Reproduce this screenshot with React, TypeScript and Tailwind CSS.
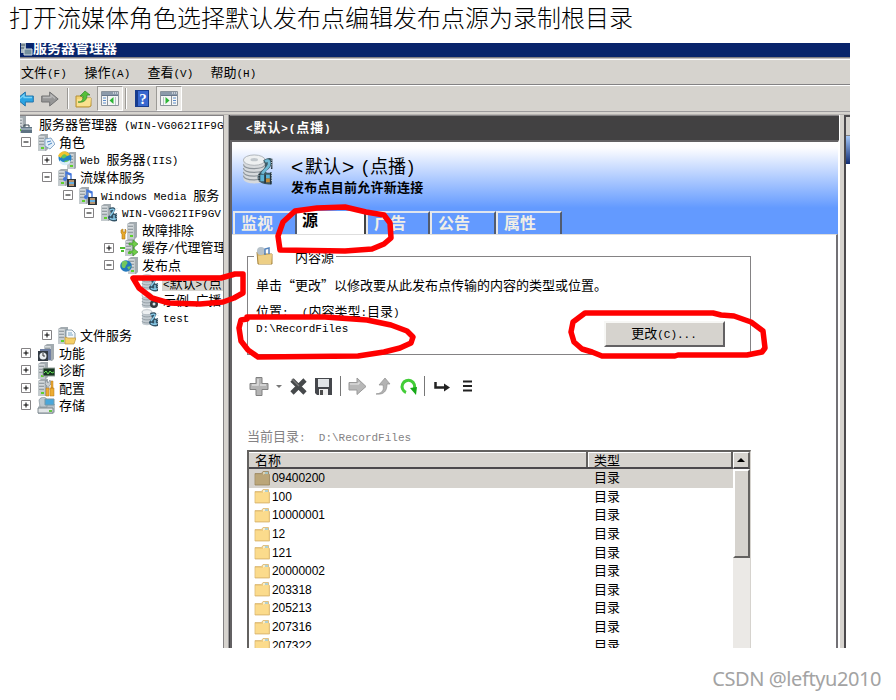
import React from "react";

const CJK = "font-['Liberation_Sans','Noto_Sans_CJK_SC',sans-serif]";

/* Mixed text: full-width glyphs keep the inherited size, half-width runs use a mono face at half the em. */
function Mix({ text, className = "" }: { text: string; className?: string }) {
  const runs = text.match(/[\x20-\x7e]+|[^\x20-\x7e]+/g) ?? [];
  return (
    <span className={"inline-block whitespace-pre " + className}>
      {runs.map((r, i) =>
        /^[\x20-\x7e]/.test(r) ? (
          <span key={i} className="font-['Liberation_Mono',monospace] text-[0.846em]">{r}</span>
        ) : (
          <span key={i} className="font-['Noto_Sans_CJK_SC',sans-serif]">{r}</span>
        )
      )}
    </span>
  );
}

type Kind =
  | "root" | "roles" | "web" | "media" | "host" | "wrench" | "cache" | "globe"
  | "point" | "broadcast" | "files" | "feature" | "diag" | "config" | "storage";

function Tower({ x = 1, y = 0 }: { x?: number; y?: number }) {
  return (
    <g transform={`translate(${x} ${y})`}>
      <path d="M0 2 3 0h7v15l-2 2H0z" fill="#a3abb0" />
      <path d="M0 2h7v15H0z" fill="#c3cacd" />
      <path d="M1 4h5M1 7h5M1 10h5" stroke="#68737a" />
      <path d="M1 3h5M1 6h5M1 9h5" stroke="#e6eaec" />
      <path d="M3 13h3v2H3z" fill="#5ed02c" />
    </g>
  );
}

function Disks() {
  return (
    <g>
      <path d="M1 3v11c0 3 10 3 10 0V3z" fill="#c3cbd1" />
      <path d="M1 6c0 2.500 10 2.500 10 0M1 9c0 2.500 10 2.500 10 0M1 12c0 2.500 10 2.500 10 0" fill="none" stroke="#8b959d" strokeWidth=".8" />
      <ellipse cx="6" cy="3.200" rx="5" ry="2.500" fill="#edf0f2" stroke="#a5aeb5" strokeWidth=".7" />
    </g>
  );
}

function Film() {
  return (
    <g>
      <path d="M9 4c6-2 8 1 5 4-1 2 1 2 3 1v8c-3 1-8 0-9-3 0-3 3-3 3-5z" fill="#335366" />
      <path d="M10 6c4-2 5 0 3 2l-3 4M10 14c1 2 3 1 6 1m-2-4v5" fill="none" stroke="#8accea" strokeWidth="1.400" />
      <path d="M17 4v3m0 3v5" stroke="#d7e6ec" strokeDasharray="1 1" />
    </g>
  );
}

function TreeIcon({ kind }: { kind: Kind }) {
  let art: React.ReactNode = null;
  if (kind === "root")
    art = <><Tower x={0} /><path d="M5 11h11v6H5z" fill="#5f7383" /><path d="M8 11V9h5v2" fill="none" stroke="#374750" /><path d="M5 13h11" stroke="#c7d6df" /></>;
  if (kind === "roles")
    art = <><Tower /><path d="m8 5 6-1 4 6-5 5-5-3z" fill="#e3effa" stroke="#6d94bb" strokeWidth=".8" /><path d="m10 8 4-1m-3 4 4-2" stroke="#4b88c4" /></>;
  if (kind === "web")
    art = <><Tower x={9} y={1} /><circle cx="7" cy="7" r="6.500" fill="#2381c8" /><path d="M3 3c4-4 8 0 6 2S6 8 4 7M6 10l5-1-2 4z" fill="#63c557" /><path d="M0 5c3-6 9-6 12-1l-3 1C7 2 4 3 3 7z" fill="#f2c230" /><path d="M2 9c3 3 6 3 10 0v3c-3 3-7 3-10 0z" fill="#d8edf8" /></>;
  if (kind === "media")
    art = <><Tower x={0} /><path d="M8 10V3l5 2v5M8 4l5 2" fill="none" stroke="#4176dc" strokeWidth="1.400" /><circle cx="7" cy="10" r="2" fill="#4176dc" /><path d="M9 10h9v8H9z" fill="#2b3238" /><path d="M11 11h5v6h-5z" fill="#b69470" /><path d="M11 14h5" stroke="#69b0e0" strokeWidth="2" /></>;
  if (kind === "host") art = <><Tower /><Film /></>;
  if (kind === "wrench")
    art = <><Tower x={7} /><path d="M1 8v3l1 1v5h3v-5l1-1V8L5 7v3H3V7z" fill="#e8aa2a" stroke="#a9731a" strokeWidth=".6" /></>;
  if (kind === "cache")
    art = <><Tower x={5} /><path d="M0 9h5M1 12h3" stroke="#4ebb30" strokeWidth="2" /><path d="M9 4h4V1l5 4-5 4V6H9zM9 12h4V9l5 4-5 4v-3H9z" fill="#70cd4a" stroke="#378f27" strokeWidth=".6" /></>;
  if (kind === "globe")
    art = <><Tower x={8} /><circle cx="6" cy="9" r="5.800" fill="#2378bd" /><path d="M2 5c3-3 7 0 5 2s-1 4-3 4-3-2-2-6M7 10l4-1-2 4z" fill="#72c75d" /></>;
  if (kind === "point") art = <><Disks /><Film /></>;
  if (kind === "broadcast") art = <><Disks /><circle cx="13" cy="12" r="4" fill="#363b40" /><circle cx="13" cy="12" r="1.500" fill="#dbe4eb" /></>;
  if (kind === "files")
    art = <><Tower x={0} /><path d="M8 3h6l3 3v7H8z" fill="#f4f8fb" stroke="#70889a" strokeWidth=".8" /><path d="M10 6h4m-4 2h5" stroke="#7ea8c5" /><path d="m7 10 3 1h8l-2 6H7z" fill="#f5cf68" stroke="#bd943f" strokeWidth=".7" /></>;
  if (kind === "feature")
    art = <><Tower x={7} /><path d="M3 5h11v11H3z" fill="#6d7da1" /><path d="M1 7h10v10H1z" fill="#323a43" /><circle cx="6" cy="12" r="3.500" fill="#e8edf1" /><path d="M6 12V9m0 3h2" stroke="#333" /></>;
  if (kind === "diag")
    art = <><Tower /><path d="M6 6h12v8H6z" fill="#173620" stroke="#9aa6a1" /><path d="m7 11 2-2 2 3 2-3 2 2 2-1" fill="none" stroke="#65e155" /></>;
  if (kind === "config")
    art = <><Tower /><path d="m9 1 2 3 2-3 1 4-2 2v4h-2V7L8 5z" fill="#c8cdd0" stroke="#77828a" strokeWidth=".6" /><path d="M9 9h3v8H9zM14 2h2v7h-2zm-1 7h4v8h-4z" fill="#edac31" stroke="#b47419" strokeWidth=".5" /></>;
  if (kind === "storage")
    art = <><path d="m1 10 3-3h14v8l-2 2H1z" fill="#b8c0c6" /><path d="M1 11h15v5H1z" fill="#e1e5e7" stroke="#68737b" strokeWidth=".8" /><path d="M2 3c2-4 8-3 8 0v7H3z" fill="#bdc8cf" stroke="#7d8a92" strokeWidth=".6" /><path d="M8 2h9v6H8z" fill="#49a7db" stroke="#7796a5" /><path d="M12 14h3" stroke="#61c640" strokeWidth="2" /></>;
  return <svg className="h-[18px] w-[18px] shrink-0" viewBox="0 0 18 18">{art}</svg>;
}

function Folder({ dark = false }: { dark?: boolean }) {
  return (
    <svg className="h-[15px] w-4 shrink-0" viewBox="0 0 16 15">
      <path d="M1 2.500h6.500l1.500-2h5.500V3l1 .5v10.500H1z" fill={dark ? "#b7a275" : "#f0cc7d"} stroke={dark ? "#9b875e" : "#d9b873"} strokeWidth=".8" />
      <path d="M9 1h5v3H9z" fill={dark ? "#ddd3b2" : "#f8edc9"} />
      <path d="M11 1.500h3v1h-3z" fill="#6ab4d8" />
      <path d="M1.500 4H9l1-1h4.500v10h-13z" fill={dark ? "#bba678" : "#fbdb8c"} />
    </svg>
  );
}

/* pad: indent before the expander, or before the icon where a row has none */
const tree: { pad: string; box?: string; kind: Kind; label: string; selected?: boolean }[] = [
  { pad: "w-0", kind: "root", label: "服务器管理器 (WIN-VG062IIF9G" },
  { pad: "w-0", box: "−", kind: "roles", label: "角色" },
  { pad: "w-[21px]", box: "+", kind: "web", label: "Web 服务器(IIS)" },
  { pad: "w-[21px]", box: "−", kind: "media", label: "流媒体服务" },
  { pad: "w-[42px]", box: "−", kind: "media", label: "Windows Media 服务" },
  { pad: "w-[63px]", box: "−", kind: "host", label: "WIN-VG062IIF9GV" },
  { pad: "w-[100px]", kind: "wrench", label: "故障排除" },
  { pad: "w-[83px]", box: "+", kind: "cache", label: "缓存/代理管理" },
  { pad: "w-[83px]", box: "−", kind: "globe", label: "发布点" },
  { pad: "w-[121px]", kind: "point", label: "<默认>(点", selected: true },
  { pad: "w-[121px]", kind: "broadcast", label: "示例_广播" },
  { pad: "w-[121px]", kind: "point", label: "test" },
  { pad: "w-[21px]", box: "+", kind: "files", label: "文件服务" },
  { pad: "w-0", box: "+", kind: "feature", label: "功能" },
  { pad: "w-0", box: "+", kind: "diag", label: "诊断" },
  { pad: "w-0", box: "+", kind: "config", label: "配置" },
  { pad: "w-0", box: "+", kind: "storage", label: "存储" },
];

function Expander({ sign }: { sign: string }) {
  return (
    <svg className="mr-[6px] h-[11px] w-[11px] shrink-0" viewBox="0 0 11 11">
      <path d="M.5.5h9v9h-9z" fill="#fff" stroke="#848284" />
      <path d={sign === "+" ? "M2.500 5h5M5 2.500v5" : "M2.500 5h5"} stroke="#000" />
    </svg>
  );
}

function Tree() {
  return (
    <div className="w-[203px] shrink-0 overflow-hidden border-t border-[#848284] bg-white pt-[.7px] text-[13px]">
      {tree.map((r, i) => (
        <div key={i} className="flex h-[17.53px] items-center whitespace-nowrap leading-[16px]">
          <span className={"shrink-0 " + (i === 0 ? "-ml-[4px] w-0" : r.box ? "ml-px " + r.pad : r.pad)} />
          {r.box && <Expander sign={r.box} />}
          <div className={"flex " + (r.box ? "-ml-px" : "")}><TreeIcon kind={r.kind} /></div>
          <Mix text={r.label} className={r.selected ? "ml-[3px] h-[16px] bg-[#d6d3ce] px-px" : i === 0 ? "ml-[5px] tracking-[.05px]" : "ml-[4px]"} />
        </div>
      ))}
    </div>
  );
}

function ConsoleIcon({ flip = false }: { flip?: boolean }) {
  return (
    <svg className="h-[15px] w-[18px]" viewBox="0 0 18 15">
      <path d="M.5.5h17v14H.5z" fill="#f5f6f5" stroke="#8b939b" />
      <path d="M1 1h16v3H1z" fill="#8c9aaa" />
      <path d="M12 2h1m1 0h1m1 0h1" stroke="#fff" />
      <path d="M1 4.500h16" stroke="#68778b" />
      <g transform={flip ? "matrix(-1 0 0 1 18 0)" : undefined}>
        <path d="M6.500 5v9" stroke="#8b939b" />
        <path d="M2 7h3M2 9.500h3M2 12h3" stroke="#5d8cc9" />
        <path d="M12.500 6v7L8.500 9.500z" fill="#2bb534" />
        <path d="M14.500 6v8" stroke="#b9c2c8" />
      </g>
    </svg>
  );
}

function BlockArrow({ blue = false }: { blue?: boolean }) {
  return (
    <svg className="h-4 w-[18px] shrink-0" viewBox="0 0 18 16">
      <g transform={blue ? "matrix(-1 0 0 1 18 0)" : undefined}>
        <path d="M.7 5h8V1l8.500 7-8.500 7v-4h-8z" fill={blue ? "#2ba4e3" : "#969696"} stroke={blue ? "#2374aa" : "#737373"} strokeWidth="1" />
        <path d="M2 6.500h8V4l4 3.500" fill="none" stroke={blue ? "#79d2f6" : "#b9b9b9"} strokeWidth="1.300" />
      </g>
    </svg>
  );
}

function Toolbar() {
  return (
    <div className="flex h-[26px] shrink-0 items-center border-t border-white">
      <div className="-ml-[4px] flex"><BlockArrow blue /></div>
      <div className="ml-[7px] flex"><BlockArrow /></div>
      <i className="ml-[8px] h-[21px] w-px bg-[#9b9995]" />
      <i className="mr-[6px] h-[21px] w-px bg-white" />
      <svg className="h-[18px] w-[17px]" viewBox="0 0 17 18">
        <path d="M1 6h5l2 2h8v8l-2 1H1z" fill="#f4d26f" stroke="#b48f36" />
        <path d="m2 9 14-1-1 8H2z" fill="#fae18f" />
        <path d="M3 12c4 0 5-2 5-6H5l5-5 5 4h-3c0 5-3 8-9 7z" fill="#55bf39" stroke="#2f8a26" strokeWidth=".7" />
      </svg>
      <div className="ml-[5px] flex h-[25px] w-[26px] items-center justify-center border border-[#9c9a96] border-r-white border-b-white bg-[#ebe9e6]"><ConsoleIcon /></div>
      <i className="ml-[2px] h-[21px] w-px bg-[#9b9995]" />
      <i className="mr-[8px] h-[21px] w-px bg-white" />
      <div className="flex h-[17px] w-[14px] items-center justify-center border border-[#173c8e] border-l-[3px] bg-[#3968cf] font-['Liberation_Serif',serif] text-[15px] font-bold leading-4 text-white">?</div>
      <div className="ml-[7px] flex h-[25px] w-[26px] items-center justify-center border border-[#9c9a96] border-r-white border-b-white bg-[#ebe9e6]"><ConsoleIcon flip /></div>
    </div>
  );
}

function Tab({ label, width }: { label: string; width: string }) {
  return (
    <div className={"h-[23px] border-t-2 border-r-2 border-l-2 border-t-[#dfe5ee] border-l-[#e8e8e8] border-r-[#515b70] pl-[6px] text-[16px] font-bold leading-[21px] text-[#f0eee6] " + width}>
      {label}
    </div>
  );
}

function Header() {
  return (
    <div className="flex h-[92px] shrink-0 flex-col bg-[linear-gradient(to_bottom,#fff_0,#fdfdff_6px,#639aff_66px,#639aff_100%)]">
      <div className="flex h-[69px] pl-[10px] pt-[12px]">
        <svg className="h-[33px] w-[32px]" viewBox="0 0 33 35">
          <path d="M1 6v20c0 7 23 7 23 0V6z" fill="#d7dadd" />
          <path d="M1 11c1 6 21 6 23 0M1 15c1 6 21 6 23 0M1 19c1 6 21 6 23 0M1 23c1 6 21 6 23 0" fill="none" stroke="#8e959b" strokeWidth="1.200" />
          <ellipse cx="12.500" cy="6.500" rx="11.500" ry="5.500" fill="#eef0f1" stroke="#adb3b8" />
          <ellipse cx="12.500" cy="6" rx="4" ry="1.700" fill="#c1c7cc" />
          <path d="M22 7c3-3 9-4 9-1 1 6-2 9-6 12 0 3 3 2 6 1v13c-6 1-15-1-15-7 0-6 9-8 8-14z" fill="#3d5a66" />
          <path d="M24 8c4-3 5 1 4 4-2 4-6 6-7 9" fill="none" stroke="#6fb9d4" strokeWidth="3" />
          <path d="M18 20v9M31 5v11M30 20v12M24 22v9" stroke="#24323a" strokeWidth="1.500" />
          <path d="M19 22h4v7h-4zM25 22h4v4h-4z" fill="#5bb3d6" /><path d="M25 26h4v4h-4z" fill="#c48b37" />
          <path d="M31 6v8m0 6v10M17.500 20v9" stroke="#e1edf2" strokeDasharray="1 1.500" />
        </svg>
        <div className="-mt-[2px] ml-[17px] whitespace-nowrap">
          <div className="flex h-[25px] text-[18px] leading-[30px]">
            <span className="w-[14px] text-[21px]">&lt;</span><span>默认</span>
            <span className="w-[21px] pl-px text-[21px]">&gt;</span><span className="w-[8px]">(</span>
            <span>点播</span><span className="pl-[2px]">)</span>
          </div>
          <div className="text-[13px] font-bold leading-[22px] tracking-[.25px]">发布点目前允许新连接</div>
        </div>
      </div>
      <div className="flex h-[23px] pl-px">
        <Tab label="监视" width="w-[64px]" />
        <div className="h-[23px] w-[69px] border-r-2 border-[#424242] bg-white pl-[5px] text-[16px] font-bold leading-[20px]">源</div>
        <Tab label="广告" width="w-[64px]" />
        <Tab label="公告" width="w-[66px]" />
        <Tab label="属性" width="w-[66px]" />
      </div>
    </div>
  );
}

function ListTools() {
  return (
    <svg className="ml-[17px] h-[22px] w-[224px]" viewBox="249 375 224 22">
      <path d="M256 377.500h6v6h6v6h-6v6h-6v-6h-6v-6h6z" fill="#b4b4b4" stroke="#808080" />
      <path d="M258 379v6h-6m8 0h6" fill="none" stroke="#ddd" strokeWidth="1.500" />
      <path d="M276 385h6l-3 3z" fill="#777" />
      <path d="m292 380 13 13m0-13-13 13" stroke="#46494b" strokeWidth="4.600" />
      <path d="m292 379 7 7" stroke="#777" strokeWidth="1.500" />
      <path d="M315 378h17v17h-15l-2-2z" fill="#45474c" />
      <path d="M318 379h11v8h-11z" fill="#e1e4e7" />
      <path d="M319 389h9v6h-9z" fill="#efefef" /><path d="M320 390h3v5h-3z" fill="#4b4b4b" />
      <path d="M340.500 376v20M424.500 376v20" stroke="#777" />
      <path d="M349 382.500h8V378l9 8.500-9 8v-4.500h-8z" fill="#b8b8b8" stroke="#999" />
      <path d="M350 384h9v-2" fill="none" stroke="#e8e8e8" />
      <path d="M376 394c7-1 8-4 7-9h-4l6-7 5 6h-3c0 7-3 11-11 10z" fill="#b3b3b3" stroke="#8f8f8f" strokeWidth=".7" />
      <path d="M406 392.500a6.300 6.300 0 1 1 8-3" fill="none" stroke="#43cd38" strokeWidth="3" />
      <path d="m410 388 7-1-1 8z" fill="#16a918" />
      <path d="M435.500 382v5.500H445" fill="none" stroke="#222" strokeWidth="2.500" /><path d="m444 383.500 6 4-6 4z" fill="#222" />
      <path d="M463 381.500h9M463 386h9M463 390.500h9" stroke="#222" strokeWidth="2" />
    </svg>
  );
}

const rows = ["09400200", "100", "10000001", "12", "121", "20000002", "203318", "205213", "207316", "207322"];

function FileTable() {
  return (
    <div className="ml-[15px] flex h-[199px] w-[504px] shrink-0 overflow-hidden border-t-2 border-l-2 border-[#63615f] border-r border-r-[#d6d3ce]">
      <div className="w-[484px] shrink-0">
        <div className="flex h-[17px] border-b-2 border-[#4b494c] bg-[#d6d3ce] text-[13px] leading-[17px] shadow-[inset_0_1px_#fff]">
          <div className="w-[339px] border-r-2 border-[#63615f] pl-[6px]">名称</div>
          <div className="w-[145px] border-r-2 border-l border-r-[#63615f] border-l-white pl-[5px]">类型</div>
        </div>
        {rows.map((r, i) => (
          <div key={r} className={"flex h-[18.6px] items-center pl-[5px] text-[12px] leading-[18px] " + (i === 0 ? "bg-[#d6d3ce]" : "")}>
            <Folder dark={i === 0} />
            <span className="ml-[2px] w-[322px] font-['Liberation_Sans',sans-serif] tracking-[-.05px]">{r}</span>
            <span className="text-[13px]">目录</span>
          </div>
        ))}
      </div>
      <div className="w-[17px] bg-[#ebe9e6]">
        <div className="flex h-[17px] items-center justify-center border border-white border-r-2 border-b-2 border-r-[#63615f] border-b-[#4b494c] bg-[#d6d3ce]">
          <i className="h-0 w-0 border-x-4 border-b-4 border-x-transparent border-b-black" />
        </div>
        <div className="h-[89px] border-2 border-white border-r-[#63615f] border-b-[#63615f] bg-[#d6d3ce]" />
      </div>
    </div>
  );
}

function SourcePane() {
  return (
    <div className="flex flex-1 flex-col border-r-2 border-[#737176] border-t border-t-[#dedede] bg-white">
      <div className="mt-[12px] flex h-[18px] w-[519px] shrink-0 items-center pl-[15px]">
        <i className="h-px w-[7px] bg-[#848284]" />
        <svg className="ml-[2px] h-[18px] w-[17px]" viewBox="0 0 17 18">
          <path d="M1 5h6l2 2h7v10H2z" fill="#dcb766" stroke="#a68643" />
          <circle cx="5" cy="4" r="4" fill="#b7c2ca" /><path d="M9 8V2l4-1v6" fill="none" stroke="#5483bc" strokeWidth="1.500" />
          <path d="m2 9 14-2-1 10H3z" fill="#edcf86" />
        </svg>
        <span className="ml-[22px] h-[15px] w-[41px] whitespace-nowrap text-[13px] leading-[17px]">内容源</span>
        <i className="h-px flex-1 bg-[#848284]" />
      </div>
      <div className="-mt-[9px] ml-[15px] flex h-[99px] w-[504px] shrink-0 border border-t-0 border-[#848284] pl-[8px] text-[13px]">
        <div className="w-[348px] shrink-0 whitespace-nowrap pt-[19px]">
          <div className="h-[26px] leading-[20px]"><span className="font-['Noto_Sans_CJK_SC',sans-serif]">单击<span className="inline-block w-[13px] text-right">“</span>更改<span className="inline-block w-[13px]">”</span>以修改要从此发布点传输的内容的类型或位置。</span></div>
          <div className="h-[17px] leading-[20px]"><Mix text="位置:  (内容类型:目录)" /></div>
          <div className="leading-[20px]"><Mix text="D:\RecordFiles" /></div>
        </div>
        <button className="mt-[65px] h-[26px] w-[121px] border-2 border-[#f7f7f5] border-r-[#636163] border-b-[#636163] bg-[#d6d3ce] pr-px leading-[20px]"><Mix text="更改(C)..." /></button>
      </div>
      <div className="mt-[20px] flex shrink-0"><ListTools /></div>
      <div className="mt-[29px] h-[24px] shrink-0 pl-[15px] text-[13px] leading-[20px] text-[#848284]"><Mix text="当前目录:  D:\RecordFiles" /></div>
      <FileTable />
    </div>
  );
}

function Marks() {
  return (
    <svg className="pointer-events-none absolute left-0 top-0 h-[700px] w-[896px]" viewBox="0 0 896 700" fill="none" stroke="#f00" strokeWidth="5.500" strokeLinejoin="round" strokeLinecap="round">
      <path d="M280 250 278 236 283 222 295 211 317 208 345 207 366 212 384 215 390 223 391 238 384 244 372 249 345 251Z" />
      <path d="M133 278 221 278 235 274 243 274 243 293 234 298 223 302 200 304 169 303 152 298 139 288Z" />
      <path d="M247 317 325 317 367 320 391 325 407 331 413 337 411 343 400 348 384 352 358 356 258 357 248 350 241 341 239 328 241 320 247 319" />
      <path d="M585 313H713L721 315 734 316 751 322 763 331 765 348 762 352 747 355H678L675 356H602L592 352 582 349 574 342 571 332 573 322Z" />
    </svg>
  );
}

export default function App() {
  return (
    <div className={"relative h-[700px] w-[896px] overflow-hidden bg-white text-black " + CJK}>
      <h1 className="h-[43px] whitespace-nowrap pl-[9px] pt-px text-[24px] font-light leading-[36px]">打开流媒体角色选择默认发布点编辑发布点源为录制根目录</h1>
      <div className="ml-5 flex h-[605px] w-[830px] flex-col overflow-hidden bg-[#d6d3ce]">
        <div className="flex h-[14px] shrink-0 overflow-hidden bg-[#08246b] text-[14px] font-bold leading-[10px] text-white">
          <svg className="h-[13px] w-[13px]" viewBox="0 0 13 13"><path d="M1 0h5v10H1z" fill="#aab8c0" /><path d="M4 6h8v6H4z" fill="#75909f" stroke="#ced9df" /><path d="M1 2h4m-4 3h3" stroke="#47565f" /></svg>
          <span>服务器管理器</span>
        </div>
        <div className="h-[3px] shrink-0 border-b border-t border-t-[#848284] border-b-white bg-[#c1bec1]" />
        <div className="flex h-[25px] shrink-0 border-b border-[#848284] pl-px text-[13px] leading-[24px]">
          <Mix text="文件(F)" className="w-[63.500px]" />
          <Mix text="操作(A)" className="w-[63px]" />
          <Mix text="查看(V)" className="w-[63px]" />
          <Mix text="帮助(H)" />
        </div>
        <Toolbar />
        <div className="h-[4px] shrink-0 border-t border-b border-t-[#9c9a9c] border-b-[#b7b4b1]" />
        <div className="flex min-h-0 flex-1">
          <Tree />
          <div className="w-[6px] shrink-0 border-l border-r border-l-[#848284] border-r-[#9c9a9c]" />
          <div className="flex w-[610px] shrink-0 flex-col border-l border-[#424142]">
            <div className="h-[25px] shrink-0 border-t border-[#848284] bg-[#424142] pl-[16px] text-[13px] font-bold leading-[22px] text-white"><Mix text="<默认>(点播)" className="tracking-[.9px]" /></div>
            <div className="flex min-h-0 flex-1 flex-col border-t-2 border-l-2 border-r border-t-[#636163] border-l-[#636163] border-r-white bg-white">
              <Header />
              <SourcePane />
            </div>
          </div>
          <div className="w-[7px] shrink-0 border-l border-r-2 border-l-white border-r-[#4b494c] bg-[#d6d3ce]" />
          <div className="flex flex-1 flex-col bg-white">
            <div className="h-[20px] border-t-2 border-[#4b494c] bg-[#d6d3ce]" />
            <div className="h-[29px] border-t border-[#848284] bg-[linear-gradient(to_bottom,#a5c7f7,#102c73)]" />
          </div>
        </div>
      </div>
      <div className="mr-[15px] mt-[18px] text-right font-['Noto_Sans',sans-serif] text-[20px] leading-[26px] tracking-[-.42px] text-[#a3a3a3]">CSDN @leftyu2010</div>
      <Marks />
    </div>
  );
}
